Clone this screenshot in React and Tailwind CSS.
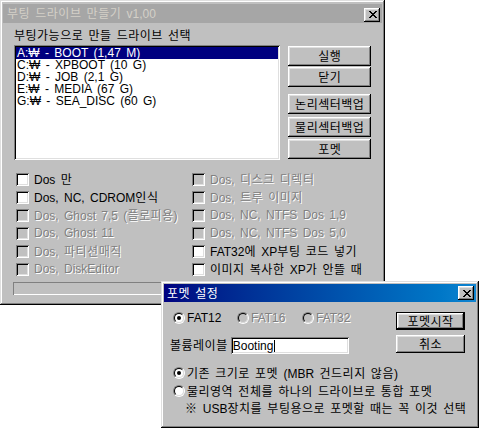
import React from "react";

const WIN = "shadow-[inset_-1px_-1px_#000,inset_1px_1px_#dfdfdf,inset_-2px_-2px_#808080,inset_2px_2px_#fff]";
const RAISED = "shadow-[inset_-1px_-1px_#000,inset_1px_1px_#fff,inset_-2px_-2px_#808080,inset_2px_2px_#dfdfdf]";
const SUNK = "shadow-[inset_1px_1px_#808080,inset_-1px_-1px_#fff,inset_2px_2px_#000,inset_-2px_-2px_#dfdfdf]";
const DIS = "text-[#808080] [text-shadow:1px_1px_0_#fff]";

const HANGUL = /([\u1100-\u11FF\u3130-\u318F\uAC00-\uD7AF\u203B]+(?:\s+[\u1100-\u11FF\u3130-\u318F\uAC00-\uD7AF\u203B]+)*)/;

function T({ children }) {
  const parts = String(children).split(HANGUL);
  return parts.map((p, i) =>
    i % 2 === 1 ? (
      <span key={i} className="font-['Noto_Sans_CJK_KR',sans-serif] text-[12px] tracking-[0.5px] [word-spacing:2px]">
        {p}
      </span>
    ) : (
      <React.Fragment key={i}>{p}</React.Fragment>
    )
  );
}

function CloseBtn({ className = "" }) {
  return (
    <div className={`w-[16px] h-[14px] bg-[#c0c0c0] flex items-center justify-center pl-[1px] ${RAISED} ${className}`}>
      <svg width="8" height="7" viewBox="0 0 8 7" shapeRendering="crispEdges">
        <rect x="0" y="0" width="2" height="1" fill="#000" />
        <rect x="6" y="0" width="2" height="1" fill="#000" />
        <rect x="1" y="1" width="2" height="1" fill="#000" />
        <rect x="5" y="1" width="2" height="1" fill="#000" />
        <rect x="2" y="2" width="4" height="1" fill="#000" />
        <rect x="3" y="3" width="2" height="1" fill="#000" />
        <rect x="2" y="4" width="4" height="1" fill="#000" />
        <rect x="1" y="5" width="2" height="1" fill="#000" />
        <rect x="5" y="5" width="2" height="1" fill="#000" />
        <rect x="0" y="6" width="2" height="1" fill="#000" />
        <rect x="6" y="6" width="2" height="1" fill="#000" />
      </svg>
    </div>
  );
}

function Button({ children, className = "" }) {
  return (
    <div className={`bg-[#c0c0c0] flex items-center justify-center leading-[12px] whitespace-nowrap ${RAISED} ${className}`}>
      <span><T>{children}</T></span>
    </div>
  );
}

function Check({ label, disabled }) {
  return (
    <div className="flex items-center h-[18px] gap-[5px]">
      <div className={`w-[13px] h-[13px] shrink-0 ${disabled ? "bg-[#c0c0c0]" : "bg-white"} ${SUNK}`} />
      <span className={`leading-[12px] whitespace-nowrap ${disabled ? DIS : "text-black"}`}>
        <T>{label}</T>
      </span>
    </div>
  );
}

function Radio({ checked, disabled }) {
  return (
    <div className="w-[12px] h-[12px] shrink-0 rounded-full border border-t-[#808080] border-l-[#808080] border-b-white border-r-white">
      <div className={`w-full h-full rounded-full border border-t-black border-l-black border-b-[#dfdfdf] border-r-[#dfdfdf] flex items-center justify-center ${disabled ? "bg-[#c0c0c0]" : "bg-white"}`}>
        {checked && <div className="w-[4px] h-[4px] rounded-full bg-black" />}
      </div>
    </div>
  );
}

const drives = [
  "A:₩ - BOOT (1,47 M)",
  "C:₩ - XPBOOT (10 G)",
  "D:₩ - JOB (2,1 G)",
  "E:₩ - MEDIA (67 G)",
  "G:₩ - SEA_DISC (60 G)",
];

const checks = [
  ["Dos 만", false],
  ["Dos, 디스크 디렉터", true],
  ["Dos, NC, CDROM인식", false],
  ["Dos, 트루 이미지", true],
  ["Dos, Ghost 7,5 (플로피용)", true],
  ["Dos, NC, NTFS Dos 1,9", true],
  ["Dos, Ghost 11", true],
  ["Dos, NC, NTFS Dos 5,0", true],
  ["Dos, 파티션매직", true],
  ["FAT32에 XP부팅 코드 넣기", false],
  ["Dos, DiskEditor", true],
  ["이미지 복사한 XP가 안뜰 때", false],
];

export default function App() {
  return (
    <div className="relative w-[482px] h-[428px] bg-white overflow-hidden text-[12px] text-black [word-spacing:2px] font-['Liberation_Sans','Noto_Sans_CJK_KR',sans-serif]">
      {/* Main window */}
      <div className={`absolute left-0 top-0 w-[385px] h-[305px] bg-[#c0c0c0] p-[3px] flex flex-col ${WIN}`}>
        <div className="h-[19px] mt-px bg-[#a6a6a6] flex items-center justify-between pl-[4px] pr-[2px]">
          <span className="text-[#d4d0c8] leading-[12px] whitespace-nowrap">
            <T>부팅 드라이브 만들기 v1,00</T>
          </span>
          <CloseBtn className="mt-[2px]" />
        </div>
        <div className="flex flex-col px-[11px]">
          <div className="mt-[6px] leading-[12px] h-[12px] whitespace-nowrap">
            <T>부팅가능으로 만들 드라이브 선택</T>
          </div>
          <div className="mt-[4px] flex gap-[8px]">
            <div className={`w-[268px] h-[115px] bg-white p-[2px] ${SUNK}`}>
              {drives.map((d, i) => (
                <div
                  key={d}
                  className={`h-[12px] leading-[12px] pl-[1px] whitespace-nowrap ${i === 0 ? "bg-[#000080] text-white" : "text-black"}`}
                >
                  {d}
                </div>
              ))}
            </div>
            <div className="w-[83px] flex flex-col pt-[1px]">
              <Button className="h-[20px]">실행</Button>
              <Button className="h-[20px] mt-[1px]">닫기</Button>
              <Button className="h-[20px] mt-[7px]">논리섹터백업</Button>
              <Button className="h-[20px] mt-[3px]">물리섹터백업</Button>
              <Button className="h-[20px] mt-[2px]">포멧</Button>
            </div>
          </div>
          <div className="mt-[10px] pl-[2px] grid grid-cols-[176px_1fr]">
            {checks.map(([l, d]) => (
              <Check key={l} label={l} disabled={d} />
            ))}
          </div>
          <div className="mt-[4px] -ml-px w-[360px] h-[13px] shadow-[inset_1px_1px_#808080,inset_-1px_-1px_#fff]" />
        </div>
      </div>

      {/* Format dialog */}
      <div className={`absolute left-[161px] top-[281px] w-[318px] h-[147px] bg-[#c0c0c0] p-[3px] flex flex-col ${WIN}`}>
        <div className="h-[18px] bg-linear-to-r from-[#000080] to-[#1084d0] flex items-center justify-between pl-[3px] pr-[2px]">
          <span className="text-white leading-[12px] whitespace-nowrap">
            <T>포멧 설정</T>
          </span>
          <CloseBtn />
        </div>
        <div className="flex justify-between pl-[6px] pr-[11px]">
          <div className="flex flex-col pt-[7px]">
            <div className="h-[18px] flex items-center pl-[3px]">
              <div className="w-[64px] flex items-center gap-[2px]">
                <Radio checked />
                <span className="leading-[12px]">FAT12</span>
              </div>
              <div className="w-[65px] flex items-center gap-[2px]">
                <Radio disabled />
                <span className={`leading-[12px] ${DIS}`}>FAT16</span>
              </div>
              <div className="flex items-center gap-[2px]">
                <Radio disabled />
                <span className={`leading-[12px] ${DIS}`}>FAT32</span>
              </div>
            </div>
            <div className="mt-[10px] h-[17px] flex items-center gap-[3px]">
              <span className="leading-[12px] whitespace-nowrap">
                <T>볼륨레이블</T>
              </span>
              <div className={`w-[118px] h-[17px] bg-white flex items-center pl-[2px] ${SUNK}`}>
                <span className="leading-[12px]">Booting</span>
                <span className="w-px h-[12px] bg-black ml-px" />
              </div>
            </div>
          </div>
          <div className="w-[69px] flex flex-col pt-[10px]">
            <div className="border border-black">
              <Button className="h-[16px]">포멧시작</Button>
            </div>
            <Button className="h-[18px] mt-[5px]">취소</Button>
          </div>
        </div>
        <div className="mt-[10px] flex flex-col pl-[9px]">
          <div className="h-[18px] flex items-center gap-[2px]">
            <Radio checked />
            <span className="leading-[12px] whitespace-nowrap">
              <T>기존 크기로 포멧 (MBR 건드리지 않음)</T>
            </span>
          </div>
          <div className="h-[18px] flex items-center gap-[2px]">
            <Radio />
            <span className="leading-[12px] whitespace-nowrap">
              <T>물리영역 전체를 하나의 드라이브로 통합 포멧</T>
            </span>
          </div>
          <div className="h-[16px] flex items-center pl-[12px]">
            <span className="leading-[12px] whitespace-nowrap">
              <T>※ USB장치를 부팅용으로 포멧할 때는 꼭 이것 선택</T>
            </span>
          </div>
        </div>
      </div>
    </div>
  );
}
